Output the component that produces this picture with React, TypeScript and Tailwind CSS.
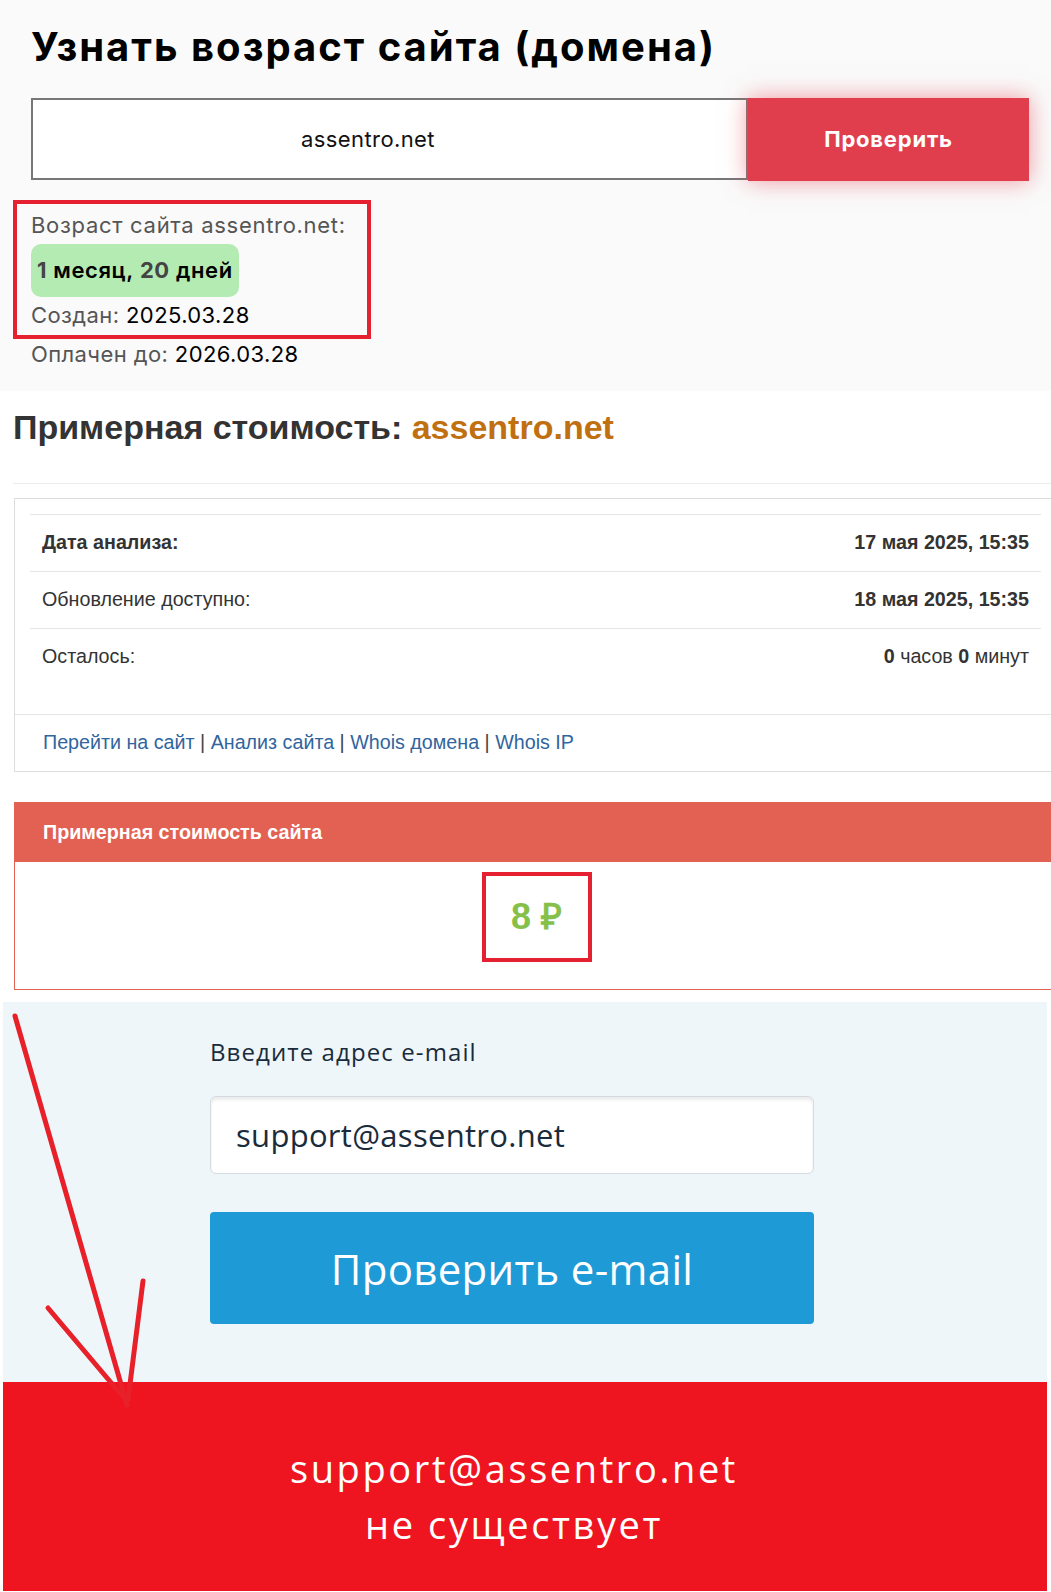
import React from 'react'

const mont = { fontFamily: 'Inter, "Noto Sans", sans-serif' }
const arial = { fontFamily: '"Liberation Sans", Arial, sans-serif' }
const prox = { fontFamily: '"Open Sans", Lato, sans-serif' }

function AgeSection() {
  return (
    <section className="bg-[#fafafa] h-[391px] pt-[23px]" style={mont}>
      <h1 className="ml-[31px] text-[40px] leading-[48px] font-bold text-black tracking-[2px]">
        Узнать возраст сайта (домена)
      </h1>
      <div className="flex ml-[31px] mt-[27px]">
        <div className="w-[717px] h-[82px] border-2 border-[#777] bg-white flex items-center justify-center pr-[43px] text-[22px] tracking-[0.4px] text-[#111]">
          assentro.net
        </div>
        <button className="w-[281px] h-[83px] bg-[#e03e4d] text-white text-[22px] font-bold tracking-[0.8px] shadow-[0_0_22px_rgba(230,70,85,0.55)]">
          Проверить
        </button>
      </div>
      <div className="ml-[13px] mt-[19px] w-[358px] h-[139px] border-4 border-[#e52030] pl-[14px] pt-[6px] text-[22px] tracking-[0.4px]">
        <div className="leading-[30px] text-[#555] tracking-[0.7px]">Возраст сайта assentro.net:</div>
        <div className="mt-[4px] inline-flex items-center h-[53px] px-[6px] rounded-[10px] bg-[#b3ebb3] font-semibold text-black tracking-[0.6px]">
          <b className="text-[#444] font-bold">1</b>&nbsp;месяц,&nbsp;<b className="text-[#444] font-bold">20</b>&nbsp;дней
        </div>
        <div className="leading-[30px] mt-[3px] text-[#555]">
          Создан: <span className="text-black">2025.03.28</span>
        </div>
      </div>
      <div className="ml-[31px] text-[22px] tracking-[0.4px] leading-[30px] text-[#555]">
        Оплачен до: <span className="text-black">2026.03.28</span>
      </div>
    </section>
  )
}

function Row({ label, value, boldLabel }: { label: string; value: React.ReactNode; boldLabel?: boolean }) {
  return (
    <div className="h-[57px] border-t border-[#e6e6e6] flex items-center justify-between px-[12px] text-[19.7px] text-[#333]">
      <span className={boldLabel ? 'font-bold' : ''}>{label}</span>
      <span>{value}</span>
    </div>
  )
}

function CostSection() {
  return (
    <section className="bg-white pb-[12px]" style={arial}>
      <h2 className="ml-[13px] pt-[16px] h-[92px] text-[34px] font-bold text-[#333] leading-[40px]">
        Примерная стоимость: <span className="text-[#c07010]">assentro.net</span>
      </h2>
      <div className="ml-[13px] border-t border-[#ececec]" />
      <div className="ml-[14px] mt-[14px] w-[1045px] border border-[#dddddd]">
        <div className="pt-[15px] pl-[15px] pr-[17px] pb-[29px]">
          <Row label="Дата анализа:" boldLabel value={<b>17 мая 2025, 15:35</b>} />
          <Row label="Обновление доступно:" value={<b>18 мая 2025, 15:35</b>} />
          <Row
            label="Осталось:"
            value={
              <>
                <b>0</b> часов <b>0</b> минут
              </>
            }
          />
        </div>
        <div className="h-[57px] border-t border-[#e6e6e6] flex items-center pl-[28px] text-[19.7px] text-[#444]">
          <a className="text-[#30659d]">Перейти на сайт</a>&nbsp;|&nbsp;
          <a className="text-[#30659d]">Анализ сайта</a>&nbsp;|&nbsp;
          <a className="text-[#30659d]">Whois домена</a>&nbsp;|&nbsp;
          <a className="text-[#30659d]">Whois IP</a>
        </div>
      </div>
      <div className="ml-[14px] mt-[30px] w-[1045px] border border-[#e36152]">
        <div className="h-[59px] bg-[#e36152] flex items-center pl-[28px] text-white text-[19.7px] font-bold">
          Примерная стоимость сайта
        </div>
        <div className="h-[127px] pt-[10px] flex justify-center">
          <div className="w-[110px] h-[90px] border-4 border-[#e52030] flex items-center justify-center text-[36px] font-bold text-[#86c04a]">
            8 ₽
          </div>
        </div>
      </div>
    </section>
  )
}

function EmailSection() {
  return (
    <section className="ml-[3px] w-[1044px]" style={prox}>
      <div className="bg-[#eef6fa] h-[380px] pt-[35px] pl-[207px]">
        <div className="text-[24px] leading-[30px] tracking-[1.1px] text-[#1a2b3c] font-medium">Введите адрес e-mail</div>
        <div className="mt-[29px] w-[604px] h-[78px] bg-white border border-[#d5dbe0] rounded-[6px] shadow-[inset_0_3px_3px_rgba(0,0,0,0.08)] flex items-center pl-[25px] text-[31px] tracking-[0.3px] text-[#1a2b3c]">
          support@assentro.net
        </div>
        <button className="mt-[38px] w-[604px] h-[112px] bg-[#1e9ad6] rounded-[4px] text-white text-[42px] tracking-[0.3px]">
          Проверить e-mail
        </button>
      </div>
      <div className="bg-[#ef1520] h-[209px] flex flex-col items-center pt-[58px] pr-[22px] text-white text-[38px] leading-[56px] tracking-[2.6px]">
        <div>support@assentro.net</div>
        <div>не существует</div>
      </div>
    </section>
  )
}

function Arrow() {
  return (
    <svg className="absolute left-0 top-0 pointer-events-none" width="1051" height="1592" viewBox="0 0 1051 1592">
      <g stroke="#e8202a" strokeWidth="5" strokeLinecap="round" fill="none">
        <line x1="15" y1="1016" x2="127" y2="1405" />
        <line x1="48" y1="1308" x2="124" y2="1398" />
        <line x1="143" y1="1281" x2="128" y2="1400" />
      </g>
    </svg>
  )
}

export default function App() {
  return (
    <div className="relative w-[1051px] h-[1592px] overflow-hidden bg-white">
      <AgeSection />
      <CostSection />
      <EmailSection />
      <Arrow />
    </div>
  )
}
